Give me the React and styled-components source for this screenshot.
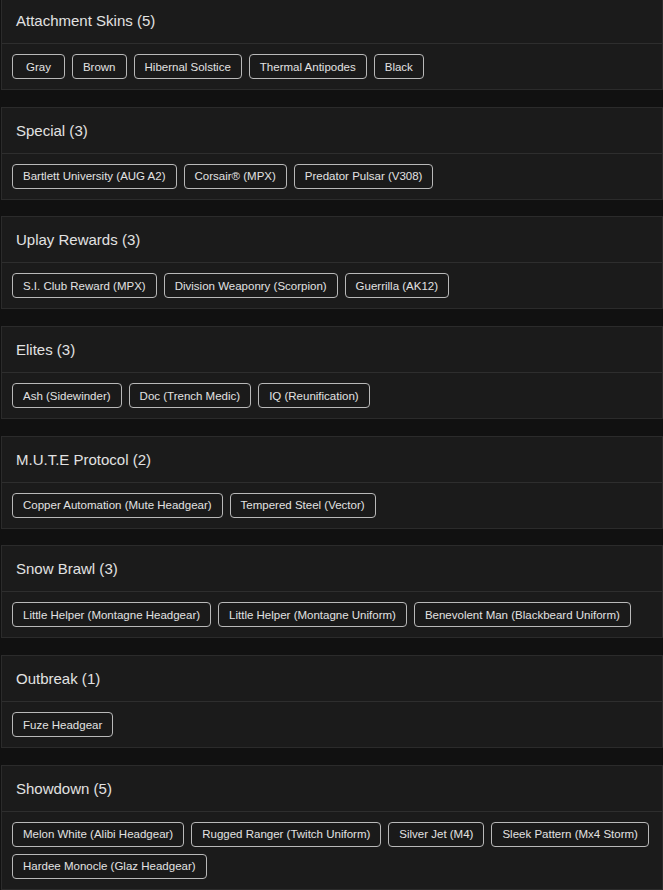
import React from 'react';
import styled, { createGlobalStyle } from 'styled-components';

const GlobalStyle = createGlobalStyle`
  body {
    margin: 0;
    background-color: #111111;
    font-family: "Liberation Sans", Arial, sans-serif;
  }
`;

const Page = styled.div`
  display: flex;
  flex-direction: column;
  gap: 16.7px;
  margin-top: -3px;
  margin-left: 1px;
  padding-bottom: 20px;
`;

const Card = styled.section`
  background-color: #1b1b1b;
  border: 1px solid #2b2b2b;
`;

const CardHeader = styled.div`
  height: 45px;
  display: flex;
  align-items: center;
  padding: 0 14px;
  border-bottom: 1px solid #2e2e2e;
  color: #e2e2e2;
  font-size: 15px;
`;

const CardBody = styled.div`
  display: flex;
  flex-wrap: wrap;
  gap: 7px;
  padding: 10px 10px;
`;

const SkinButton = styled.button`
  box-sizing: border-box;
  height: 25px;
  display: inline-flex;
  align-items: center;
  padding: 0 ${(p) => (p.$wide ? 13 : 10)}px;
  background-color: #1a1a1a;
  border: 1px solid #b9b9b9;
  border-radius: 4px;
  color: #e2e2e2;
  font-family: "Liberation Sans", Arial, sans-serif;
  font-size: 11.5px;
  white-space: nowrap;
  cursor: pointer;
`;

const groups = [
  { title: 'Attachment Skins', items: ['Gray', 'Brown', 'Hibernal Solstice', 'Thermal Antipodes', 'Black'] },
  { title: 'Special', items: ['Bartlett University (AUG A2)', 'Corsair® (MPX)', 'Predator Pulsar (V308)'] },
  { title: 'Uplay Rewards', items: ['S.I. Club Reward (MPX)', 'Division Weaponry (Scorpion)', 'Guerrilla (AK12)'] },
  { title: 'Elites', items: ['Ash (Sidewinder)', 'Doc (Trench Medic)', 'IQ (Reunification)'] },
  { title: 'M.U.T.E Protocol', items: ['Copper Automation (Mute Headgear)', 'Tempered Steel (Vector)'] },
  {
    title: 'Snow Brawl',
    items: ['Little Helper (Montagne Headgear)', 'Little Helper (Montagne Uniform)', 'Benevolent Man (Blackbeard Uniform)'],
  },
  { title: 'Outbreak', items: ['Fuze Headgear'] },
  {
    title: 'Showdown',
    items: [
      'Melon White (Alibi Headgear)',
      'Rugged Ranger (Twitch Uniform)',
      'Silver Jet (M4)',
      'Sleek Pattern (Mx4 Storm)',
      'Hardee Monocle (Glaz Headgear)',
    ],
  },
];

export default function App() {
  return (
    <>
      <GlobalStyle />
      <Page>
        {groups.map((g) => (
          <Card key={g.title}>
            <CardHeader>
              {g.title} ({g.items.length})
            </CardHeader>
            <CardBody>
              {g.items.map((item) => (
                <SkinButton key={item} $wide={item.length <= 4}>
                  {item}
                </SkinButton>
              ))}
            </CardBody>
          </Card>
        ))}
      </Page>
    </>
  );
}
